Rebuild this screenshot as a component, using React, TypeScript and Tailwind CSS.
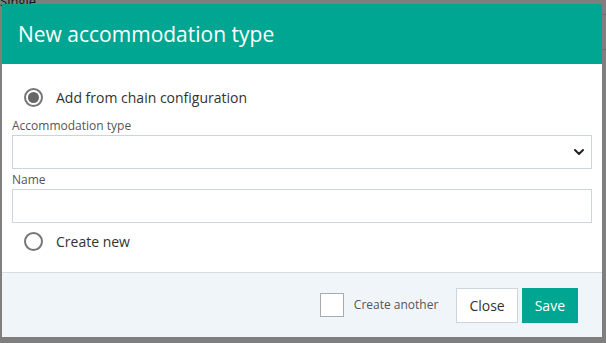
import { ChevronDown } from 'lucide-react'

function Radio({ checked, label }: { checked?: boolean; label: string }) {
    return (
        <label className="flex items-center gap-[13px] pl-[12px] h-[24px]">
            <span className="w-[19px] h-[19px] rounded-full border-2 border-[#777] flex items-center justify-center bg-white">
                {checked && <span className="w-[11px] h-[11px] rounded-full bg-[#666]" />}
            </span>
            <span className="text-[14px] text-[#333]">{label}</span>
        </label>
    )
}

export default function App() {
    return (
        <div
            className="relative w-[606px] h-[343px] bg-[#7f7f7f] overflow-hidden"
            style={{ fontFamily: '"Open Sans", "Noto Sans", sans-serif' }}
        >
            {/* page behind the overlay */}
            <div className="absolute left-0 -top-[8px] text-[13px] text-[#111]">Single</div>
            <div className="absolute right-0 top-[14px] w-[4px] h-px bg-[#6a6a6a]" />
            <div className="absolute right-0 top-[49px] w-[4px] h-px bg-[#6a6a6a]" />

            <div className="absolute left-[2px] top-[4px] w-[600px] h-[333px] flex flex-col bg-white">
                <div className="h-[60px] bg-[#00a692] flex items-center px-[16px]">
                    <h1 className="text-[21px] text-white leading-none">New accommodation type</h1>
                </div>

                <div className="flex-1 flex flex-col pt-[21px] px-[10px]">
                    <Radio checked label="Add from chain configuration" />

                    <div className="mt-[9px] text-[12px] text-[#555] leading-[16px]">Accommodation type</div>
                    <div className="mt-[1px] h-[34px] border border-[#ccd5dd] flex items-center justify-end pr-[4px]">
                        <ChevronDown className="w-[16px] h-[16px] text-[#222]" strokeWidth={3} />
                    </div>

                    <div className="mt-[3px] text-[12px] text-[#555] leading-[16px]">Name</div>
                    <div className="mt-[1px] h-[34px] border border-[#ccd5dd]" />

                    <div className="mt-[6px]">
                        <Radio label="Create new" />
                    </div>
                </div>

                <div className="h-[65px] bg-[#f0f5fa] border-t border-[#dadde0] flex items-center justify-end pr-[24px]">
                    <span className="w-[24px] h-[24px] border border-[#aaa] bg-white" />
                    <span className="ml-[10px] text-[12px] text-[#555]">Create another</span>
                    <button className="ml-[18px] h-[35px] px-[12px] bg-white border border-[#ccd5dd] text-[14px] text-[#333]">
                        Close
                    </button>
                    <button className="ml-[4px] h-[35px] px-[13px] bg-[#00a692] text-[14px] text-white">
                        Save
                    </button>
                </div>
            </div>
        </div>
    )
}
